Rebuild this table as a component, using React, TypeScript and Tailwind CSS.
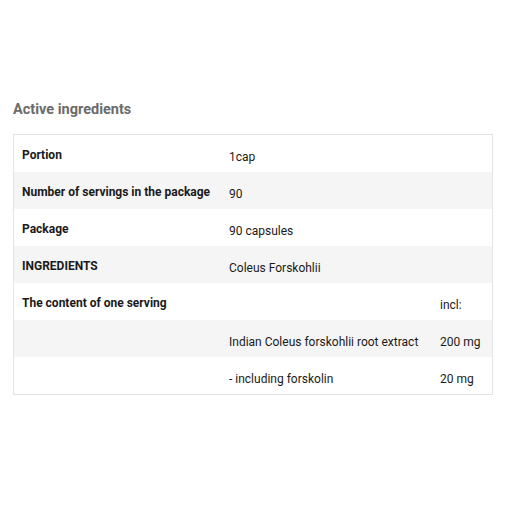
const rows: { label: string; value: string; extra?: string }[] = [
  { label: 'Portion', value: '1cap' },
  { label: 'Number of servings in the package', value: '90' },
  { label: 'Package', value: '90 capsules' },
  { label: 'INGREDIENTS', value: 'Coleus Forskohlii' },
  { label: 'The content of one serving', value: '', extra: 'incl:' },
  { label: '', value: 'Indian Coleus forskohlii root extract', extra: '200 mg' },
  { label: '', value: '- including forskolin', extra: '20 mg' },
];

export default function App() {
  return (
    <div className="w-[505px] h-[505px] bg-white px-[13px] pt-[101px] font-['Roboto',sans-serif]">
      <h2 className="text-[14.5px] font-bold text-[#6b6b6b] leading-[18px]">Active ingredients</h2>
      <div className="mt-[15px] w-[480px] border border-[#e3e3e3]">
        {rows.map((row, i) => (
          <div
            key={i}
            className={`grid grid-cols-[206px_211px_1fr] h-[37px] text-[12px] text-[#1a1a1a] ${
              i % 2 === 1 ? 'bg-[#f5f5f5]' : 'bg-white'
            }`}
          >
            <div className="pl-[8px] pt-[13px] font-bold leading-[14px]">{row.label}</div>
            <div className="pl-[9px] pt-[15px] leading-[14px]">{row.value}</div>
            <div className="pl-[9px] pt-[15px] leading-[14px]">{row.extra}</div>
          </div>
        ))}
      </div>
    </div>
  );
}
